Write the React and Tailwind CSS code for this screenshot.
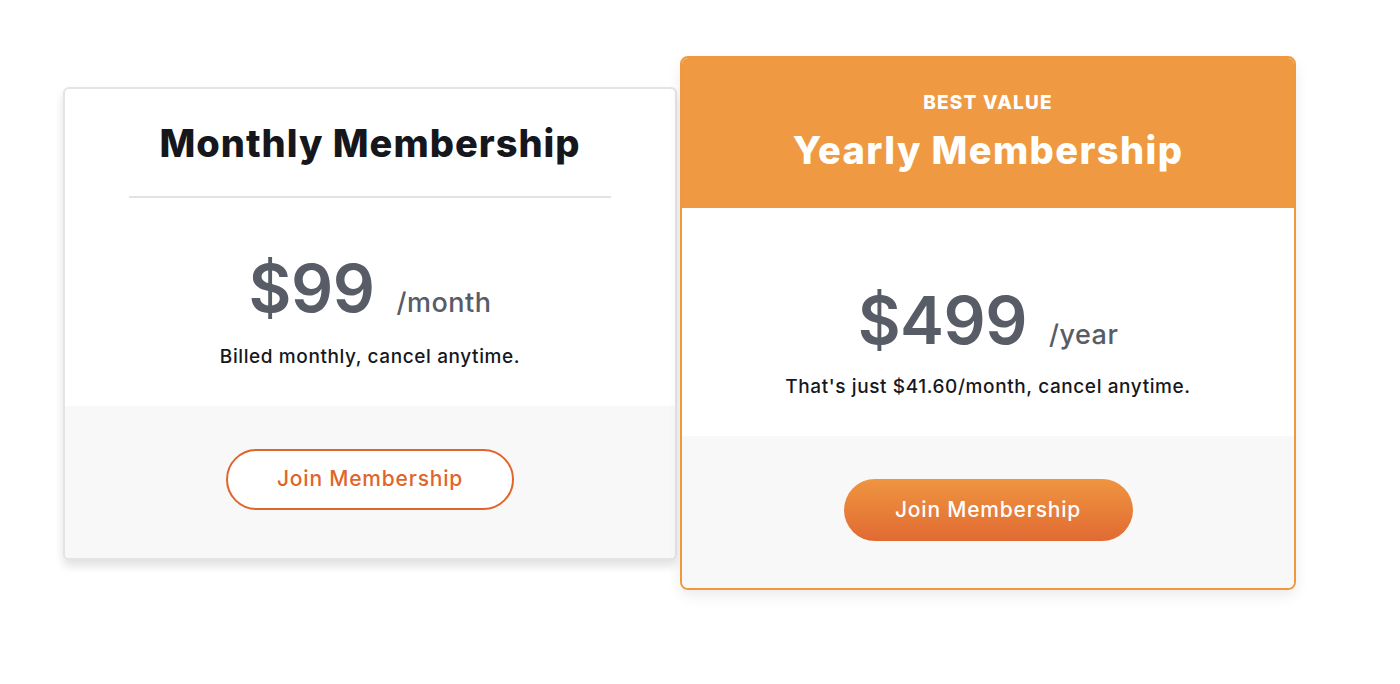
import React from 'react';

const font = { fontFamily: 'Inter, "Open Sans", sans-serif' };

const Price = ({ amount, unit }) => (
  <div className="flex items-baseline justify-center leading-none text-[#575c66]">
    <span className="text-[66px] font-semibold tracking-[-0.5px]">{amount}</span>
    <span className="ml-[22px] text-[27px] font-medium tracking-[0.5px]">{unit}</span>
  </div>
);

const MonthlyCard = () => (
  <div className="w-[614px] rounded-md border-2 border-[#e3e4e6] bg-white shadow-[0_6px_10px_rgba(0,0,0,0.12)] overflow-hidden">
    <div className="px-16 pt-8">
      <h2 className="text-center text-[38px] leading-[44px] font-extrabold text-[#15171c] tracking-[1px]">Monthly Membership</h2>
      <div className="mt-[31px] h-[2px] bg-[#e2e3e6]" />
    </div>
    <div className="pt-[57px] pb-[35px] text-center">
      <Price amount="$99" unit="/month" />
      <p className="mt-[22px] text-[19px] leading-[28px] font-medium tracking-[0.6px] text-[#16181d]">Billed monthly, cancel anytime.</p>
    </div>
    <div className="flex justify-center bg-[#f8f8f8] pt-[43px] pb-[48px]">
      <button className="h-[61px] w-[288px] rounded-full border-2 border-[#e0652a] bg-white text-[21px] font-medium tracking-[0.8px] text-[#e0652a]">
        Join Membership
      </button>
    </div>
  </div>
);

const YearlyCard = () => (
  <div className="w-[616px] rounded-lg border-2 border-[#f0993c] bg-white shadow-[0_6px_14px_rgba(0,0,0,0.08)] overflow-hidden">
    <div className="bg-[#ef9a42] pt-[33px] pb-[35px] text-center text-white">
      <div className="text-[19px] leading-[24px] font-extrabold uppercase tracking-[1.2px]">Best Value</div>
      <h2 className="mt-3 text-[38px] leading-[46px] font-extrabold tracking-[1.4px]">Yearly Membership</h2>
    </div>
    <div className="pt-[79px] pb-[35px] text-center">
      <Price amount="$499" unit="/year" />
      <p className="mt-[20px] text-[19px] leading-[28px] font-medium tracking-[0.6px] text-[#16181d]">That's just $41.60/month, cancel anytime.</p>
    </div>
    <div className="flex justify-center bg-[#f8f8f8] pt-[43px] pb-[47px]">
      <button className="h-[62px] w-[289px] rounded-full bg-gradient-to-b from-[#ef9540] to-[#e06a33] text-[21px] font-medium tracking-[0.8px] text-white">
        Join Membership
      </button>
    </div>
  </div>
);

export default function App() {
  return (
    <div style={font} className="min-h-[684px] w-[1400px] bg-white pt-[56px] pl-[63px]">
      <div className="flex items-center gap-[3px]">
        <MonthlyCard />
        <YearlyCard />
      </div>
    </div>
  );
}
